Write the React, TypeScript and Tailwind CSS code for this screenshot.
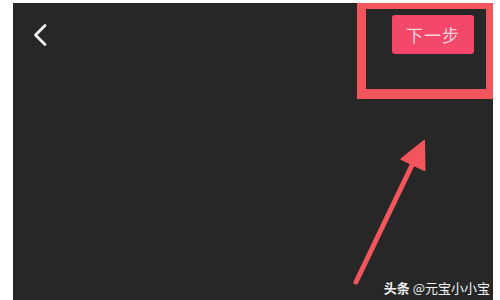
export default function App() {
  return (
    <div className="w-[500px] h-[300px] bg-white pl-[13px] pt-[3px] pr-[7px] overflow-hidden">
      <div
        className="relative h-[297px] bg-[#272727] flex justify-between items-start"
        style={{ fontFamily: '"Noto Sans CJK SC", "Noto Sans", sans-serif' }}
      >
        {/* back */}
        <button className="ml-[19px] mt-[20px] w-[16px] h-[24px] flex items-center justify-center">
          <svg width="16" height="24" viewBox="0 0 16 24" fill="none">
            <path d="M13 2.5 L3.5 12 L13 21.5" stroke="#f4f4f4" strokeWidth="2.8" strokeLinecap="round" strokeLinejoin="round" />
          </svg>
        </button>

        {/* highlighted next button */}
        <div className="w-[136px] h-[96px] border-[#f2565c] border-l-[9px] border-t-[6px] border-r-[7px] border-b-[10px] pl-[26px] pt-[6px]">
          <button className="w-[82px] h-[39px] rounded-[3px] bg-[#f3486a] text-[#fbd6dc] text-[17px] leading-none flex items-center justify-center tracking-[1px]">
            下一步
          </button>
        </div>

        {/* arrow */}
        <svg className="absolute left-0 top-0" width="480" height="297" viewBox="0 0 480 297" fill="none">
          <path d="M343 279 L400.5 159" stroke="#f2565c" strokeWidth="5" strokeLinecap="round" />
          <path d="M411 138 L388.5 156 L411.5 167 Z" fill="#f2565c" stroke="#f2565c" strokeWidth="2" strokeLinejoin="round" />
        </svg>

        {/* watermark */}
        <div className="absolute right-[3px] bottom-[6px] text-[13px] leading-none text-[#f2f2f2] whitespace-nowrap">
          <span className="font-bold">头条</span> @元宝小小宝
        </div>
      </div>
    </div>
  )
}
